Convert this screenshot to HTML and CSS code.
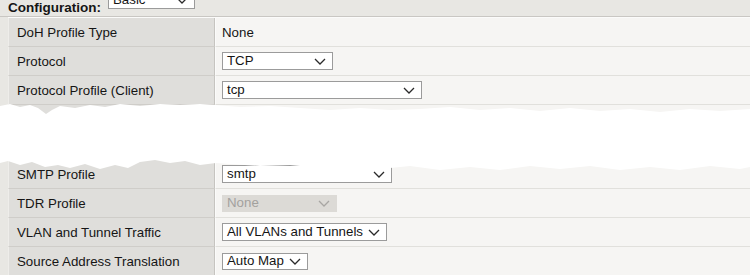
FILE: index.html
```html
<!DOCTYPE html>
<html>
<head>
<meta charset="utf-8">
<link rel="stylesheet" href="styles.css">
</head>
<body>
<div class="header">
  <span class="header-label">Configuration:</span>
  <div class="select select-basic"><span class="select-text">Basic</span><svg class="chev" viewBox="0 0 12 7" width="12" height="7"><polyline points="1,1 6,6 11,1"/></svg></div>
</div>
<div class="table">
  <div class="row">
    <div class="label">DoH Profile Type</div>
    <div class="value"><span class="plain">None</span></div>
  </div>
  <div class="row">
    <div class="label">Protocol</div>
    <div class="value"><div class="select w-tcp"><span class="select-text">TCP</span><svg class="chev" viewBox="0 0 12 7" width="12" height="7"><polyline points="1,1 6,6 11,1"/></svg></div></div>
  </div>
  <div class="row">
    <div class="label">Protocol Profile (Client)</div>
    <div class="value"><div class="select w-tcpp"><span class="select-text">tcp</span><svg class="chev" viewBox="0 0 12 7" width="12" height="7"><polyline points="1,1 6,6 11,1"/></svg></div></div>
  </div>
  <div class="tear"></div>
  <div class="row">
    <div class="label">SMTP Profile</div>
    <div class="value"><div class="select w-smtp"><span class="select-text">smtp</span><svg class="chev" viewBox="0 0 12 7" width="12" height="7"><polyline points="1,1 6,6 11,1"/></svg></div></div>
  </div>
  <div class="row">
    <div class="label">TDR Profile</div>
    <div class="value"><div class="select disabled w-tdr"><span class="select-text">None</span><svg class="chev" viewBox="0 0 12 7" width="12" height="7"><polyline points="1,1 6,6 11,1"/></svg></div></div>
  </div>
  <div class="row">
    <div class="label">VLAN and Tunnel Traffic</div>
    <div class="value"><div class="select w-vlan"><span class="select-text">All VLANs and Tunnels</span><svg class="chev" viewBox="0 0 12 7" width="12" height="7"><polyline points="1,1 6,6 11,1"/></svg></div></div>
  </div>
  <div class="row">
    <div class="label">Source Address Translation</div>
    <div class="value"><div class="select w-auto"><span class="select-text">Auto Map</span><svg class="chev" viewBox="0 0 12 7" width="12" height="7"><polyline points="1,1 6,6 11,1"/></svg></div></div>
  </div>
</div>
</body>
</html>
```
FILE: styles.css
```css
html, body {
  margin: 0;
  padding: 0;
  background: #e8e7e3;
  font-family: "Liberation Sans", Arial, sans-serif;
  font-size: 13.3px;
  color: #151515;
  overflow: hidden;
}

.header {
  display: flex;
  align-items: flex-start;
  gap: 7px;
  height: 16px;
  padding-left: 8px;
  border-bottom: 1px solid #c9c7c3;
}

.header-label {
  font-weight: bold;
  font-size: 13.5px;
  line-height: 15px;
}

.select-basic {
  margin-top: -9px;
  width: 87px;
}

.table {
  margin-left: 8px;
  border-top: 1px solid #fbfbfa;
}

.row {
  display: grid;
  grid-template-columns: 207px 1fr;
  height: 29px;
  box-sizing: border-box;
}

.label {
  background: #dfdedb;
  border-left: 1px solid #eeedea;
  border-right: 1px solid #c6c4c0;
  border-bottom: 1px solid #cfcdc9;
  padding-left: 8px;
  display: flex;
  align-items: center;
  white-space: nowrap;
}

.value {
  background: #f6f5f3;
  border-left: 1px solid #fbfbfa;
  border-bottom: 1px solid #e1e0dc;
  padding-left: 6px;
  display: flex;
  align-items: center;
}

.plain {
  padding-left: 0;
}

.select {
  box-sizing: border-box;
  height: 18px;
  background: #fff;
  border: 1px solid #9b9b9b;
  display: flex;
  align-items: center;
  justify-content: space-between;
  padding: 0 6px 0 4px;
  white-space: nowrap;
}

.select-text {
  line-height: 16px;
}

.chev {
  flex: none;
}

.chev polyline {
  fill: none;
  stroke: #2a2a2a;
  stroke-width: 1.3;
}

.select.disabled {
  background: #dcdad6;
  border-color: #dcdad6;
  color: #a3a19e;
  height: 17px;
}

.select.disabled .chev polyline {
  stroke: #a8a6a3;
}

.w-tcp { width: 111px; }
.w-tcpp { width: 200px; }
.w-smtp { width: 170px; }
.w-tdr { width: 115px; }
.w-vlan { width: 165px; }
.w-auto { width: 86px; height: 17px; }

.tear {
  position: relative;
  height: 55px;
  background: linear-gradient(to right, #dfdedb 0, #dfdedb 206px, #c6c4c0 206px, #c6c4c0 207px, #f6f5f3 207px);
}

.tear::before {
  content: "";
  position: absolute;
  left: -8px;
  right: 0;
  top: -6px;
  height: 74px;
  background: #ffffff;
  clip-path: polygon(
    0px 7px, 10px 5px, 20px 8px, 30px 6px, 38px 9px, 46px 15px, 52px 11px, 60px 7px,
    75px 9px, 90px 6px, 105px 8px, 120px 5px, 140px 7px, 160px 5px, 180px 6px, 200px 5px,
    215px 6px, 240px 8px, 270px 7px, 300px 9px, 330px 11px, 360px 9px, 390px 11px, 420px 10px,
    450px 8px, 480px 11px, 510px 9px, 540px 12px, 570px 9px, 600px 12px, 630px 10px, 660px 13px,
    690px 10px, 720px 12px, 750px 10px, 760px 10px,
    760px 66px, 740px 70px, 710px 67px, 680px 71px, 650px 68px, 620px 71px, 590px 67px,
    560px 70px, 530px 67px, 500px 71px, 470px 68px, 440px 71px, 410px 67px, 380px 70px,
    350px 67px, 320px 69px, 290px 66px, 260px 67px, 230px 65px, 216px 64px, 200px 66px,
    185px 62px, 170px 64px, 155px 61px, 140px 63px, 128px 69px, 115px 66px, 100px 70px,
    85px 65px, 70px 69px, 58px 66px, 45px 68px, 32px 63px, 20px 66px, 8px 62px, 0px 64px
  );
}
```
